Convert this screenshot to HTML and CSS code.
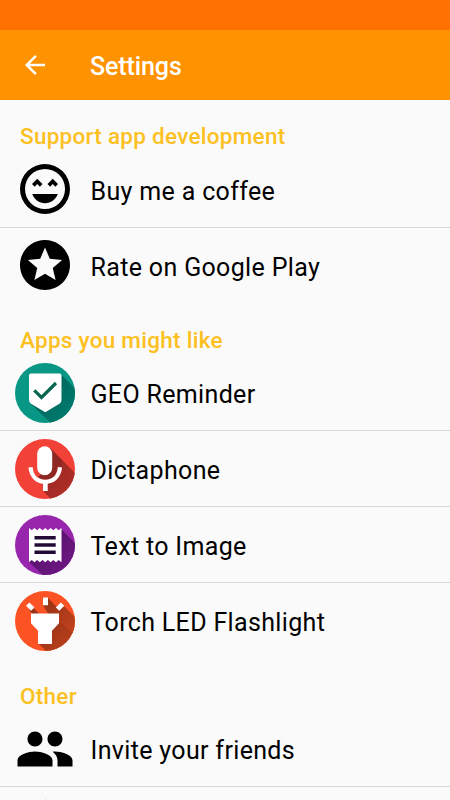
FILE: index.html
```html
<!DOCTYPE html>
<html lang="en">
<head>
<meta charset="utf-8">
<title>Settings</title>
<link rel="stylesheet" href="styles.css">
</head>
<body>
<div class="status-bar"></div>
<header class="toolbar">
  <svg class="back" viewBox="0 0 24 24"><path d="M20 11H7.830l5.590-5.590L12 4l-8 8 8 8 1.410-1.410L7.830 13H20z"/></svg>
  <h1 class="title">Settings</h1>
</header>
<main>
  <section class="group">
    <h2 class="heading">Support app development</h2>
    <div class="row row-tall">
      <svg class="icon" viewBox="0 0 24 24"><path fill-rule="evenodd" d="M12 2a10 10 0 1 0 0 20a10 10 0 0 0 0-20zM12 4a8 8 0 1 1 0 16a8 8 0 0 1 0-16zM6.890 14c.8 2.200 2.780 3.700 5.110 3.700s4.310-1.500 5.110-3.700zM6.800 10L7.850 11.060 8.900 10 9.950 11.060 11 10 8.900 7.900zM13 10l1.050 1.060L15.100 10l1.050 1.060L17.200 10l-2.100-2.100z"/></svg>
      <span class="label">Buy me a coffee</span>
    </div>
    <div class="row row-short">
      <svg class="icon" viewBox="0 0 24 24"><path d="M11.990 2C6.470 2 2 6.480 2 12s4.470 10 9.990 10C17.520 22 22 17.520 22 12S17.520 2 11.990 2zm4.240 16L12 15.450 7.770 18l1.120-4.810-3.730-3.230 4.920-.42L12 5l1.920 4.530 4.920.42-3.730 3.230L16.230 18z"/></svg>
      <span class="label">Rate on Google Play</span>
    </div>
  </section>
  <section class="group">
    <h2 class="heading">Apps you might like</h2>
    <div class="row">
      <svg class="icon" viewBox="0 0 60 60">
        <defs>
          <clipPath id="disc"><circle cx="30" cy="30" r="30"/></clipPath>
          <linearGradient id="geo-shade" x1="0" y1="0" x2="1" y2="1"><stop offset="0" stop-color="#00594f"/><stop offset="1" stop-color="#00897b"/></linearGradient>
        </defs>
        <circle cx="30" cy="30" r="30" fill="#089785"/>
        <path clip-path="url(#disc)" fill="url(#geo-shade)" d="M45.500 11L70 35.500V70H46L15 40z"/>
        <path fill="#fff" d="M16 10.500h28.500a2 2 0 0 1 2 2V37q0 2.500-2 3.800L30.200 49.200 16 40.800q-2-1.300-2-3.800V12.500a2 2 0 0 1 2-2z"/>
        <path fill="none" stroke="#066650" stroke-width="3.200" d="M19.300 27.300l7.200 7.200L41 20"/>
      </svg>
      <span class="label">GEO Reminder</span>
    </div>
    <div class="row">
      <svg class="icon" viewBox="0 0 60 60">
        <defs><linearGradient id="mic-shade" x1="0" y1="0" x2="1" y2="1"><stop offset="0" stop-color="#8c2420"/><stop offset="1" stop-color="#b9302a"/></linearGradient></defs>
        <circle cx="30" cy="30" r="30" fill="#f24136"/>
        <path clip-path="url(#disc)" fill="url(#mic-shade)" d="M35 9L62 36V70H46L28 52V46L17 36l8-2z"/>
        <path fill="#f24136" d="M17.500 28.500q1.500 12.300 12.700 12.300T43 28.500L37 22H22z"/>
        <path clip-path="url(#disc)" fill="#8f2722" d="M35 9l12 12v7.500h-4.300Q41 40.800 30 40.800q-4 0-7-2l3-4z"/>
        <rect x="22.200" y="7.200" width="15" height="29" rx="7.500" fill="#fff"/>
        <path fill="none" stroke="#fff" stroke-width="4.200" d="M15.500 28.300C16.500 37.500 22 42.800 30.200 42.800S44 37.500 45 28.300"/>
        <path fill="#fff" d="M28 43h4.700v9H28z"/>
      </svg>
      <span class="label">Dictaphone</span>
    </div>
    <div class="row">
      <svg class="icon" viewBox="0 0 60 60">
        <defs><linearGradient id="text-shade" x1="0" y1="0" x2="1" y2="1"><stop offset="0" stop-color="#4d1061"/><stop offset="1" stop-color="#7b1b91"/></linearGradient></defs>
        <circle cx="30" cy="30" r="30" fill="#9826ad"/>
        <path clip-path="url(#disc)" fill="url(#text-shade)" d="M46 14L70 38V70H38L14 47z"/>
        <path fill="#fff" d="M14 13l2.700 2.300 2.700-2.300 2.700 2.300 2.700-2.300 2.700 2.300 2.700-2.300 2.700 2.300 2.700-2.300 2.700 2.300 2.700-2.300 2.700 2.300 2.800-2.300v34.200L43.700 45 41 47.200 38.300 45l-2.700 2.200-2.700-2.200-2.700 2.200-2.700-2.200-2.700 2.200-2.700-2.200-2.700 2.200-2.700-2.200L14 47.200z"/>
        <path fill="#230b38" d="M19.500 21h21.200v3.600H19.500zM19.500 28.200h21.200v3.600H19.500zM19.500 35.400h21.200V39H19.500z"/>
      </svg>
      <span class="label">Text to Image</span>
    </div>
    <div class="row">
      <svg class="icon" viewBox="0 0 60 60">
        <defs><linearGradient id="torch-shade" x1="0" y1="0" x2="1" y2="1"><stop offset="0" stop-color="#8d2f14"/><stop offset="1" stop-color="#cf471f"/></linearGradient></defs>
        <circle cx="30" cy="30" r="30" fill="#fb5323"/>
        <g clip-path="url(#disc)" fill="url(#torch-shade)">
          <path d="M44 22L70 48v22H41L23 52z"/>
          <path d="M33 7l15 15v4H35l-7-12zM48 14l18 18v18L44 30v-9zM18.500 17l6 6h-7L14 19z"/>
        </g>
        <path fill="#fff" d="M16 22.500h28v9.800l-7 7.500V53H23V39.800l-7-7.500zM28 6.500h5v7.700h-5z"/>
        <path fill="#fff" d="M11 14.700l3.500-3.300 5 5-3.500 3.300zM45.800 11.400l3.500 3.300-5 5-3.500-3.300z"/>
      </svg>
      <span class="label">Torch LED Flashlight</span>
    </div>
  </section>
  <section class="group">
    <h2 class="heading">Other</h2>
    <div class="row">
      <svg class="icon" viewBox="0 0 24 24"><path d="M16 11c1.660 0 2.990-1.340 2.990-3S17.660 5 16 5c-1.660 0-3 1.340-3 3s1.340 3 3 3zm-8 0c1.660 0 2.990-1.340 2.990-3S9.660 5 8 5C6.340 5 5 6.340 5 8s1.340 3 3 3zm0 2c-2.330 0-7 1.170-7 3.500V19h14v-2.500c0-2.330-4.670-3.500-7-3.500zm8 0c-.29 0-.62.020-.97.050 1.160.84 1.970 1.970 1.970 3.450V19h6v-2.500c0-2.330-4.670-3.500-7-3.500z"/></svg>
      <span class="label">Invite your friends</span>
    </div>
    <div class="row">
      <svg class="icon icon-pale" viewBox="0 0 24 24"><path d="M12.200 1.300l3 6.700 7 .7-5.300 4.700 1.600 7-6.300-3.700L6 20.400l1.600-7L2.300 8.700l7-.7z"/></svg>
    </div>
  </section>
</main>
</body>
</html>
```
FILE: styles.css
```css
* { box-sizing: border-box; }

body {
  margin: 0;
  background: #fafafa;
  color: #000;
  font-family: Roboto, sans-serif;
}

.status-bar {
  height: 30px;
  background: #ff7100;
}

.toolbar {
  display: flex;
  align-items: center;
  gap: 40px;
  height: 70px;
  padding-left: 20px;
  background: #ff9200;
  color: #fff;
}

.back {
  width: 30px;
  height: 30px;
  fill: currentColor;
}

.title {
  margin: 4px 0 0;
  font-size: 25px;
  font-weight: 500;
  letter-spacing: -0.1px;
  line-height: 30px;
}

main {
  height: 700px;
  overflow: hidden;
}

.group {
  padding-top: 20px;
}

.group + .group {
  padding-top: 21px;
}

.heading {
  margin: 0;
  height: 31px;
  padding: 2px 0 0 20px;
  color: #fcc021;
  font-size: 22.5px;
  font-weight: 500;
  letter-spacing: 0.27px;
  line-height: 28px;
}

.row {
  display: flex;
  align-items: center;
  gap: 15.5px;
  height: 76px;
  padding-left: 15px;
  border-bottom: 1px solid #d8d8d8;
}

.row-tall {
  height: 77px;
}

.row-short {
  height: 75px;
}

.row:last-child {
  border-bottom-color: transparent;
}

.icon {
  flex: none;
  width: 60px;
  height: 60px;
}

.icon-pale {
  fill: #e2e2e2;
}

.label {
  padding-top: 5px;
  font-size: 25px;
  letter-spacing: 0.34px;
  line-height: 30px;
  white-space: nowrap;
}
```
